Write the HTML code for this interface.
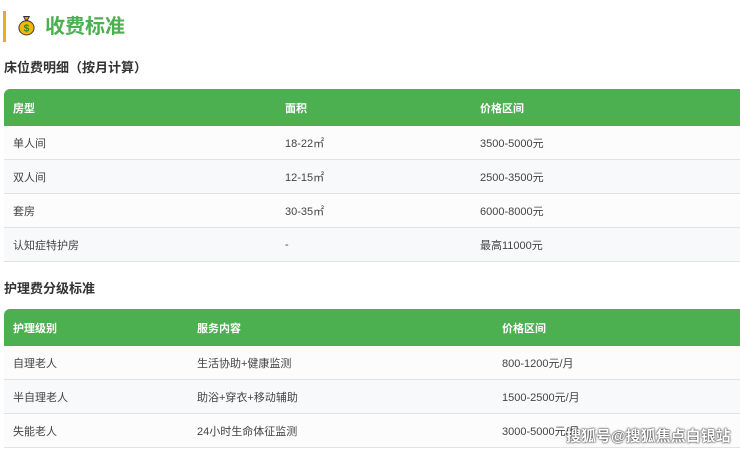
<!DOCTYPE html><html><head><meta charset="utf-8"><style>
body{margin:0;width:740px;height:454px;overflow:hidden;background:#fff;font-family:"Liberation Sans","Noto Sans CJK SC",sans-serif;position:relative}
.bar{position:absolute;left:3px;top:11px;width:3px;height:31px;background:#f5a623}
.title{position:absolute;left:18px;top:12px;font-size:20px;font-weight:bold;color:#4caf50;line-height:30px}
.sub{position:absolute;left:4px;font-size:13px;font-weight:bold;color:#333}
table{position:absolute;left:4px;width:740px;border-collapse:collapse;font-size:11px;color:#444}
th{background:#4caf50;color:#fff;text-align:left;font-weight:bold;height:37px;padding:0 0 0 9px}
th:first-child{border-top-left-radius:6px}
td{height:33px;padding:0 0 0 9px;border-bottom:1px solid #e3e3e3;background:#f8f9fa}
tr:nth-child(even) td{background:#fcfcfd}
.wm{position:absolute;left:566px;top:425px;font-size:15px;color:#fff;font-weight:bold;text-shadow:0 0 2px #333,0 0 1px #000}
</style></head><body>
<div class="bar"></div>
<div class="title"><span style="display:inline-block;width:17px;height:22px;vertical-align:-3px;margin-right:10px;position:relative"><svg width="17" height="22" viewBox="0 0 18 22"><path d="M6 2h6l-2 4h-2z" fill="#d4a017" stroke="#333" stroke-width="1"/><ellipse cx="9" cy="14" rx="8" ry="7.5" fill="#f5b800" stroke="#333" stroke-width="1"/><text x="9" y="18" font-size="11" text-anchor="middle" fill="#2a8a2a" font-weight="bold">$</text></svg></span>收费标准</div>
<div class="sub" style="top:57px">床位费明细（按月计算）</div>
<table style="top:89px"><tr><th style="width:263px">房型</th><th style="width:186px">面积</th><th>价格区间</th></tr>
<tr><td>单人间</td><td>18-22㎡</td><td>3500-5000元</td></tr>
<tr><td>双人间</td><td>12-15㎡</td><td>2500-3500元</td></tr>
<tr><td>套房</td><td>30-35㎡</td><td>6000-8000元</td></tr>
<tr><td>认知症特护房</td><td>-</td><td>最高11000元</td></tr></table>
<div class="sub" style="top:278px">护理费分级标准</div>
<table style="top:309px"><tr><th style="width:175px">护理级别</th><th style="width:296px">服务内容</th><th>价格区间</th></tr>
<tr><td>自理老人</td><td>生活协助+健康监测</td><td>800-1200元/月</td></tr>
<tr><td>半自理老人</td><td>助浴+穿衣+移动辅助</td><td>1500-2500元/月</td></tr>
<tr><td>失能老人</td><td>24小时生命体征监测</td><td>3000-5000元/月</td></tr></table>
<div class="wm">搜狐号@搜狐焦点白银站</div>
</body></html>
